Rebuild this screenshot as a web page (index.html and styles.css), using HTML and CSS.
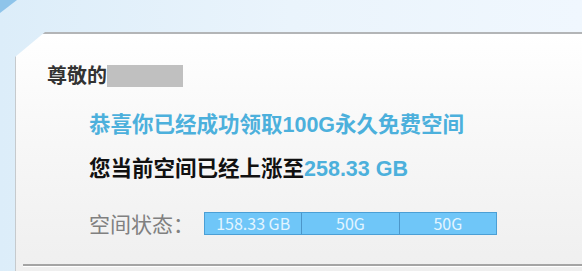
FILE: index.html
```html
<!DOCTYPE html>
<html lang="zh-CN">
<head>
    <meta charset="UTF-8">
    <meta name="viewport" content="width=device-width, initial-scale=1.0">
    <title>空间领取成功</title>
    <link rel="stylesheet" href="styles.css">
</head>
<body>
<div class="page">
    <div class="card">
        <div class="greeting">尊敬的<span class="masked"></span></div>
        <div class="notice">
            <p class="congrats">恭喜你已经成功领取100G永久免费空间</p>
            <p class="current">您当前空间已经上涨至<span class="size">258.33 GB</span></p>
            <div class="status">
                <span class="status-label">空间状态：</span>
                <div class="bar">
                    <div class="cell">158.33 GB</div>
                    <div class="cell">50G</div>
                    <div class="cell">50G</div>
                </div>
            </div>
        </div>
        <div class="divider"></div>
    </div>
</div>
</body>
</html>
```

FILE: styles.css
```css
body {
    margin: 0;
    height: 271px;
    overflow: hidden;
    font-family: "Liberation Sans", "Noto Sans CJK SC", sans-serif;
    background: linear-gradient(90deg, #dcedf9 0%, #eaf4fc 50%, #f0f7fe 100%);
}

/* blue corner in the top left */
body::before {
    content: "";
    position: absolute;
    top: 0;
    left: 0;
    width: 17px;
    height: 13px;
    background: #8ec4ea;
    clip-path: polygon(0 0, 100% 0, 0 100%);
}

.page {
    padding-top: 32px;
}

.card {
    margin-left: 15px;
    height: 239px;
    box-sizing: border-box;
    border-top: 2px solid #b3b5b7;
    border-left: 1px solid #c6cacd;
    background: linear-gradient(#ffffff 0%, #f8f8f8 40%, #efefef 100%);
    clip-path: polygon(30px 0, 100% 0, 100% 100%, 0 100%, 0 25px);
}

.greeting {
    display: flex;
    align-items: center;
    margin: 30px 0 0 31px;
    font-size: 20px;
    line-height: 24px;
    font-weight: bold;
    color: #333333;
}

.masked {
    display: inline-block;
    width: 76px;
    height: 22px;
    background-color: #c0c0c0;
}

.notice {
    margin-left: 73px;
}

.congrats,
.current {
    margin: 0;
    font-size: 21.5px;
    line-height: 24px;
    font-weight: bold;
}

.congrats {
    margin-top: 25px;
    color: #4cb0dc;
}

.current {
    margin-top: 20px;
    color: #111111;
}

.size {
    color: #4cb0dc;
}

.status {
    display: flex;
    align-items: center;
    gap: 10px;
    margin-top: 31px;
}

.status-label {
    font-family: "Noto Sans CJK SC", sans-serif;
    font-size: 21px;
    line-height: 23px;
    color: #808080;
}

.bar {
    display: flex;
    width: 293px;
    height: 23px;
    box-sizing: border-box;
    border: 1px solid #4b9fd5;
    background-color: #6fc6f8;
}

.cell {
    flex: 1;
    text-align: center;
    font-family: "Noto Sans CJK SC", sans-serif;
    font-size: 16px;
    line-height: 21px;
    color: #e3f5ff;
    border-left: 1px solid #4c96c9;
}

.cell:first-child {
    border-left: none;
}

.divider {
    margin: 29px 0 0 7px;
    border-top: 2px solid #a4a4a4;
    border-bottom: 1px solid #ffffff;
}
```
